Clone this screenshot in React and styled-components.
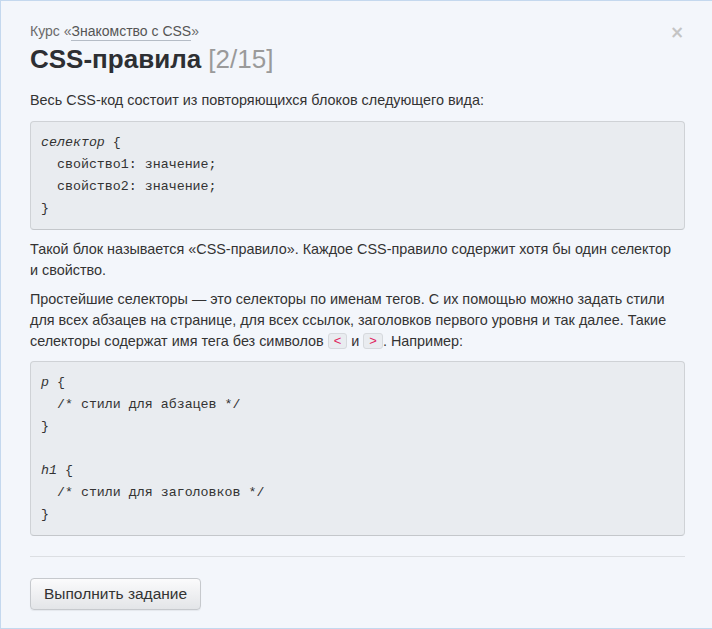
import React from 'react'
import styled, { createGlobalStyle } from 'styled-components'

const GlobalStyle = createGlobalStyle`
	html, body {
		margin: 0;
		padding: 0;
		background: #f3f6fb;
	}
	body {
		font-family: "Liberation Sans", Arial, sans-serif;
		color: #333;
		overflow: hidden;
	}
`

const firstRule = `селектор {
  свойство1: значение;
  свойство2: значение;
}`

const secondRule = `p {
  /* стили для абзацев */
}

h1 {
  /* стили для заголовков */
}`

function CodeBlock({ children, spaced }) {
	// first word of each selector line is italic
	const lines = children.split('\n')
	return (
		<Code spaced={spaced}>
			{lines.map((line, i) => {
				const m = line.match(/^(\S+)( \{)$/)
				return (
					<Line key={i}>
						{m ? (<><Sel>{m[1]}</Sel>{m[2]}</>) : (line || '\u00a0')}
					</Line>
				)
			})}
		</Code>
	)
}

function App() {
	return (
		<>
			<GlobalStyle />
			<Frame>
				<Close>×</Close>
				<Crumb>
					Курс «<CrumbLink>Знакомство с CSS</CrumbLink>»
				</Crumb>
				<Title>
					CSS-правила <Counter>[2/15]</Counter>
				</Title>

				<Text gap={14}>Весь CSS-код состоит из повторяющихся блоков следующего вида:</Text>
				<CodeBlock spaced={10}>{firstRule}</CodeBlock>

				<Text gap={9}>
					Такой блок называется «CSS-правило». Каждое CSS-правило содержит хотя бы один селектор и свойство.
				</Text>
				<Text gap={8}>
					Простейшие селекторы — это селекторы по именам тегов. С их помощью можно задать стили для всех абзацев на странице, для всех ссылок, заголовков первого уровня и так далее. Такие селекторы содержат имя тега без символов <Inline>&lt;</Inline> и <Inline>&gt;</Inline>. Например:
				</Text>
				<CodeBlock spaced={9}>{secondRule}</CodeBlock>

				<Divider />
				<Button>Выполнить задание</Button>
			</Frame>
		</>
	)
}

export default App

const Frame = styled.div `
	position: relative;
	box-sizing: border-box;
	width: 740px;
	height: 629px;
	border: 1px solid #c4d8ee;
	border-right: none;
	padding: 20px 0 0 29px;
`
const Close = styled.div `
	position: absolute;
	top: 21px;
	left: 669px;
	font-size: 17px;
	font-weight: bold;
	line-height: 20px;
	color: #c4c4c4;
	font-family: "DejaVu Sans", sans-serif;
`
const Crumb = styled.div `
	font-size: 14px;
	line-height: 20px;
	color: #6a6a6a;
`
const CrumbLink = styled.span `
	color: #555;
	border-bottom: 1px solid #b5bcc6;
	padding-bottom: 1px;
`
const Title = styled.h1 `
	margin: 1px 0 0;
	font-size: 26px;
	line-height: 34px;
	font-weight: bold;
	color: #2d2f33;
`
const Counter = styled.span `
	font-weight: normal;
	color: #9a9a9a;
`
const Text = styled.p `
	width: 650px;
	margin: ${p => p.gap}px 0 0;
	font-size: 14.4px;
	line-height: 21px;
	color: #333;
`
const Code = styled.pre `
	box-sizing: border-box;
	width: 655px;
	margin: ${p => p.spaced}px 0 0;
	padding: 10px 10px 9px;
	background: #e9ecf0;
	border: 1px solid #cfd2d6;
	border-bottom-color: #c4c7cb;
	border-radius: 4px;
	font-family: "Liberation Mono", "Courier New", monospace;
	font-size: 13.3px;
	color: #333;
`
const Line = styled.div `
	line-height: 22px;
	height: 22px;
	white-space: pre;
`
const Sel = styled.span `
	font-style: italic;
`
const Inline = styled.code `
	display: inline-block;
	vertical-align: 1px;
	line-height: 14px;
	padding: 0 5px;
	background: #e9ecf0;
	border: 1px solid #d6d9dd;
	border-radius: 3px;
	color: #e0245e;
	font-family: "Liberation Sans", Arial, sans-serif;
	font-size: 13px;
`
const Divider = styled.div `
	width: 655px;
	height: 1px;
	margin-top: 20px;
	background: #dcdfe3;
`
const Button = styled.button `
	margin-top: 21px;
	height: 32px;
	padding: 0 13px;
	font-family: "Liberation Sans", Arial, sans-serif;
	font-size: 15.5px;
	color: #333;
	background: linear-gradient(#fbfbfc, #e3e5e8);
	border: 1px solid #c6c9cd;
	border-radius: 4px;
	box-shadow: 0 1px 1px rgba(0, 0, 0, 0.06);
	cursor: pointer;
`
